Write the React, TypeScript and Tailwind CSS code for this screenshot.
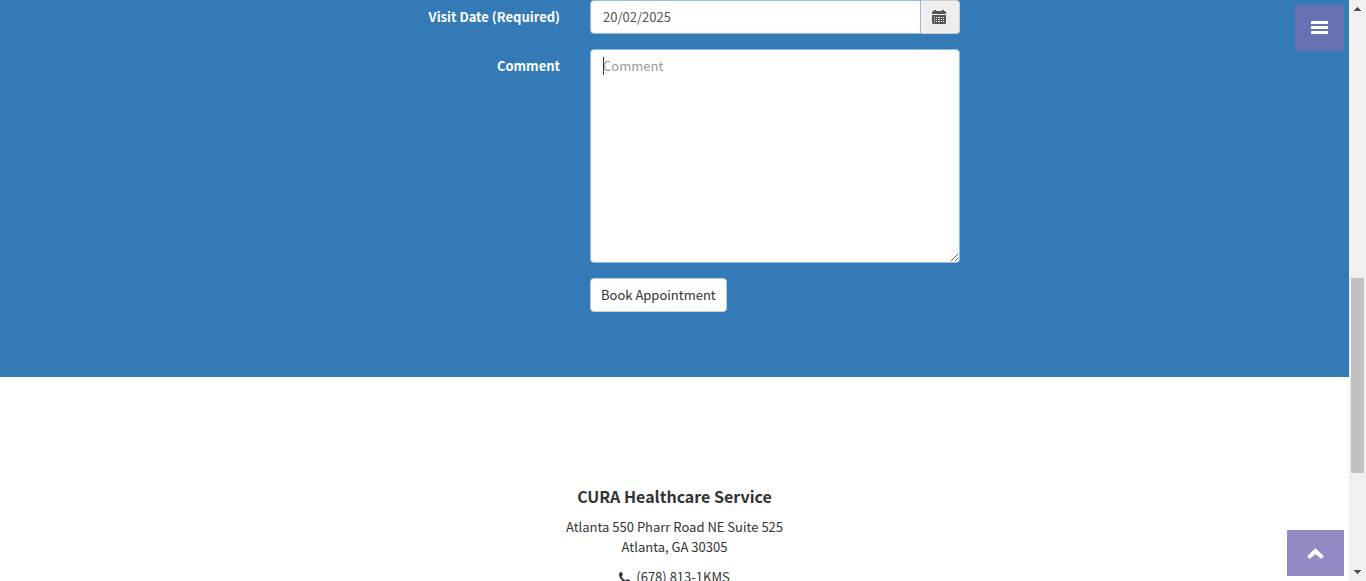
import React from "react";

const control =
  "block w-full border border-[#8fbce3] bg-white px-3 text-[13px] leading-5 text-[#555] placeholder:text-[#999] outline-none";

function Row({ label, htmlFor, children }: { label?: string; htmlFor?: string; children: React.ReactNode }) {
  return (
    <div className="mb-[15px] grid grid-cols-[560fr_759fr] gap-[30px]">
      <div className="pt-[7px] text-right">
        {label && (
          <label htmlFor={htmlFor} className="block text-[13px] leading-5 font-bold text-white">
            {label}
          </label>
        )}
      </div>
      <div className="w-[370px] max-w-full">{children}</div>
    </div>
  );
}

function CalendarIcon() {
  return (
    <svg width="14" height="14" viewBox="0 0 14 14" fill="#555" aria-hidden="true">
      <path d="M1 1h1V0h2v1h6V0h2v1h1l1 1v2H0V2z" />
      <path
        fillRule="evenodd"
        d="M0 5h14v8l-1 1H1l-1-1zM2 7v1h1V7zM4 7v1h1V7zM6 7v1h2V7zM9 7v1h1V7zM11 7v1h1V7zM2 9v1h1V9zM4 9v1h1V9zM6 9v1h2V9zM9 9v1h1V9zM11 9v1h1V9zM2 11v1h1v-1zM4 11v1h1v-1zM6 11v1h2v-1zM9 11v1h1v-1zM11 11v1h1v-1z"
      />
    </svg>
  );
}

function ScrollBar() {
  return (
    <div className="flex w-[17px] shrink-0 flex-col items-center bg-[#f0f0f0] py-[7px]" aria-hidden="true">
      <svg width="7" height="4" viewBox="0 0 7 4" fill="#505050">
        <path d="M3 0h1v1h1v1h1v1h1v1H0V3h1V2h1V1h1z" />
      </svg>
      <div className="grow-[267]" />
      <div className="w-[13px] grow-[195] bg-[#c1c1c1]" />
      <div className="grow-[97]" />
      <svg width="7" height="4" viewBox="0 0 7 4" fill="#505050">
        <path d="M0 0h7v1H6v1H5v1H4v1H3V3H2V2H1V1H0z" />
      </svg>
    </div>
  );
}

export default function App() {
  return (
    <div className="flex h-screen overflow-hidden bg-white font-['Source_Sans_Pro','Noto_Sans_CJK_JP',sans-serif] text-[13px] leading-5 text-[#333]">
      <div className="relative min-w-0 flex-1 overflow-hidden">
        <section className="bg-[#337ab7] pb-[50px]">
          <form onSubmit={(e) => e.preventDefault()}>
            <Row label="Visit Date (Required)" htmlFor="visit-date">
              <div className="flex h-[34px]">
                <input id="visit-date" type="text" defaultValue="20/02/2025" className={`${control} rounded-l-sm`} />
                <button
                  type="button"
                  aria-label="Choose date"
                  className="flex w-[39px] shrink-0 items-center justify-center rounded-r-sm border border-l-0 border-[#ccc] bg-[#eee] pr-[2px]"
                >
                  <CalendarIcon />
                </button>
              </div>
            </Row>
            <Row label="Comment" htmlFor="comment">
              <div className="relative">
                <textarea id="comment" placeholder="Comment" className={`${control} h-[214px] rounded-sm py-[6px]`} />
                <span className="absolute top-2 left-[13px] h-[18px] w-px bg-[#333]" />
              </div>
            </Row>
            <Row>
              <button type="submit" className="h-[34px] rounded-sm border border-[#ccc] bg-white px-[10px] text-[13px] leading-5 text-[#333]">
                Book Appointment
              </button>
            </Row>
          </form>
        </section>

        <footer className="pt-[110px] text-center">
          <h4 className="mb-3 text-[16px] leading-[18px] font-bold">CURA Healthcare Service</h4>
          <p className="mb-[10px]">
            Atlanta 550 Pharr Road NE Suite 525
            <br />
            Atlanta, GA 30305
          </p>
          <p className="flex items-center justify-center gap-[6px]">
            <svg width="11" height="11" viewBox="0 0 1408 1408" fill="currentColor" aria-hidden="true">
              <path d="M1408 1112q0 27-10 70.500t-21 68.500q-21 50-122 106-94 51-186 51-27 0-53-3.500t-57.500-12.500-47-14.500-55.500-20.500-49-18q-98-35-175-83-127-79-264-216T151 776q-48-77-83-175-3-9-18-49t-20.500-55.500T15 449.500 2.500 392-1 339q0-92 51-186Q106 52 156 31q25-11 68.500-21T295-0q14 0 21 3 18 6 53 76 11 19 30 54t35 63.500 31 53.500q3 4 17.500 25t21.500 35.500 7 28.500q0 20-28.500 50t-62 55-62 53-28.500 46q0 9 5 22.500t8.500 20.500 14 24 11.500 19q76 137 174 235t235 174q2 1 19 11.500t24 14 20.500 8.500 22.500 5q18 0 46-28.500t53-62 55-62 50-28.500q14 0 28.500 7t35.500 21.500 25 17.500q25 15 53.500 31t63.500 35 54 30q70 35 76 53 3 7 3 21z" />
            </svg>
            <span>(678) 813-1KMS</span>
          </p>
        </footer>

        <button
          type="button"
          aria-label="Open menu"
          className="absolute top-[5px] right-[5px] flex h-[46px] w-[49px] items-center justify-center bg-[#6772b5] pb-px"
        >
          <svg width="17" height="13" viewBox="0 0 17 13" fill="white" aria-hidden="true">
            <rect width="17" height="3" rx="0.5" />
            <rect y="5" width="17" height="3" rx="0.5" />
            <rect y="10" width="17" height="3" rx="0.5" />
          </svg>
        </button>
        <a
          href="#top"
          aria-label="Back to top"
          className="absolute right-[5px] bottom-[5px] flex h-[46px] w-[57px] items-center justify-center bg-[#918dc4]"
        >
          <svg width="17" height="11" viewBox="0 0 17 11" fill="white" stroke="white" strokeWidth="1" strokeLinejoin="round" aria-hidden="true">
            <path d="M8.500 0.700L16.300 8.300L14.300 10.300L8.500 5.700L2.700 10.300L0.700 8.300z" />
          </svg>
        </a>
      </div>
      <ScrollBar />
    </div>
  );
}
